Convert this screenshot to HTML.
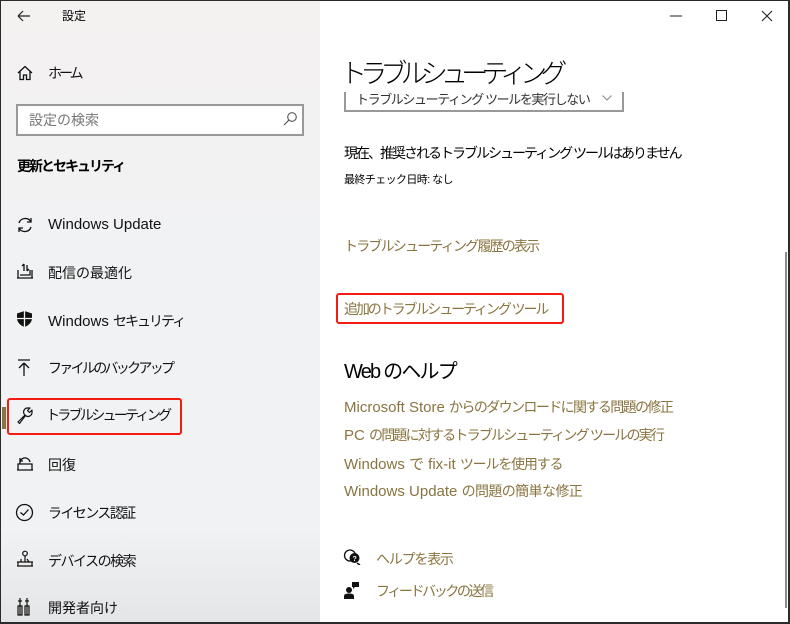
<!DOCTYPE html>
<html><head><meta charset="utf-8">
<style>
*{margin:0;padding:0;box-sizing:border-box}
body{width:790px;height:624px;overflow:hidden;font-family:"Liberation Sans","Noto Sans CJK JP",sans-serif;background:#fff;position:relative;color:#000}
.win{position:absolute;left:0;top:0;width:790px;height:624px;border:1px solid #2b2b2b;border-right:2px solid #2b2b2b;border-bottom:2px solid #2b2b2b}
.left{position:absolute;left:1px;top:1px;width:319px;height:621px;background:linear-gradient(180deg,#f4f1f1 0%,#f1f2f4 40%,#f1f2f4 85%,#e4e5e7 100%)}
.t{position:absolute;white-space:nowrap}
.nav{font-size:14px;color:#111}
.ico{position:absolute}
.link{color:#8a7440;font-size:14px}
.red{position:absolute;border:2.5px solid #f31b12;border-radius:3px}
</style></head><body>
<div class="left"></div>
<div class="win"></div>
<svg class="ico" style="left:17px;top:10px" width="14" height="12"><path d="M1 6H13M1 6L6 1M1 6L6 11" stroke="#222" stroke-width="1.2" fill="none"/></svg>
<div class="t" style="left:62px;top:7px;font-size:12px">設定</div>
<svg class="ico" style="left:670px;top:15px" width="12" height="2"><path d="M0 1H12" stroke="#222"/></svg>
<svg class="ico" style="left:716px;top:10px" width="11" height="11"><rect x="0.5" y="0.5" width="10" height="10" stroke="#222" fill="none"/></svg>
<svg class="ico" style="left:761px;top:10px" width="12" height="12"><path d="M1 1L11 11M11 1L1 11" stroke="#222" stroke-width="1.1"/></svg>
<svg class="ico" style="left:17px;top:65px" width="16" height="16"><path d="M1 8L8 1.5L15 8M3 6.5V14.5H6.5V10H9.5V14.5H13V6.5" stroke="#111" stroke-width="1.3" fill="none"/></svg>
<div class="t nav" style="left:48px;top:63px;letter-spacing:-3px">ホーム</div>
<div style="position:absolute;left:16px;top:104px;width:288px;height:32px;border:2px solid #999;background:#fff"></div>
<div class="t" style="left:29px;top:110px;font-size:14px;color:#777">設定の検索</div>
<svg class="ico" style="left:282px;top:111px" width="16" height="16"><circle cx="10" cy="6" r="4.3" stroke="#555" fill="none" stroke-width="1.1"/><path d="M7 9L2 14" stroke="#555" stroke-width="1.2"/></svg>
<div class="t" style="left:17px;top:156px;font-size:14px;font-weight:bold;letter-spacing:-2px">更新とセキュリティ</div>
<svg class="ico" style="left:16px;top:216px" width="18" height="18"><path d="M3 7A6.5 6.5 0 0 1 15 6M15 11A6.5 6.5 0 0 1 3 12" stroke="#111" stroke-width="1.3" fill="none"/><path d="M15 2V6H11M3 16V12H7" stroke="#111" stroke-width="1.3" fill="none"/></svg>
<div class="t nav" style="left:48px;top:216px;font-size:15px">Windows Update</div>
<svg class="ico" style="left:16px;top:262px" width="18" height="18"><path d="M1 16H17M2 16V8M16 16V8M4 13H14V8M8 2V9M8 2L6 4M11 9V3M11 9L13 7" stroke="#111" stroke-width="1.3" fill="none"/></svg>
<div class="t nav" style="left:48px;top:263px">配信の最適化</div>
<svg class="ico" style="left:16px;top:310px" width="17" height="18"><path d="M8.5 1L16 3.5V8C16 12.5 12.5 15.5 8.5 17C4.5 15.5 1 12.5 1 8V3.5Z" fill="#111"/><path d="M8.5 1V17M1 8.5H16" stroke="#f1f2f4" stroke-width="1.3"/></svg>
<div class="t nav" style="left:48px;top:311px;font-size:15px">Windows <span style="font-size:14px;letter-spacing:-2px">セキュリティ</span></div>
<svg class="ico" style="left:17px;top:359px" width="14" height="18"><path d="M1 1H13M7 4V17M7 4L2 9M7 4L12 9" stroke="#111" stroke-width="1.3" fill="none"/></svg>
<div class="t nav" style="left:48px;top:358px;letter-spacing:-2.7px">ファイルのバックアップ</div>
<div style="position:absolute;left:2px;top:407px;width:4px;height:22px;background:#8a7440"></div>
<div class="red" style="left:7px;top:398px;width:175px;height:37px"></div>
<svg class="ico" style="left:16px;top:406px" width="18" height="18"><path d="M2 16L9 9A4 4 0 0 1 12 2L14 2L11.5 4.5L13.5 6.5L16 4V6A4 4 0 0 1 9.5 9.5L3.5 17.5Z" stroke="#111" stroke-width="1.2" fill="none" stroke-linejoin="round"/></svg>
<div class="t nav" style="left:46px;top:405px;letter-spacing:-2.7px">トラブルシューティング</div>
<svg class="ico" style="left:16px;top:454px" width="18" height="18"><path d="M1 16H17M2 16V10H16V16M4 10A5 5 0 1 1 14 8M4 4V7H7" stroke="#111" stroke-width="1.3" fill="none"/></svg>
<div class="t nav" style="left:48px;top:455px">回復</div>
<svg class="ico" style="left:15px;top:503px" width="19" height="19"><circle cx="9.5" cy="9.5" r="8" stroke="#111" stroke-width="1.3" fill="none"/><path d="M5.5 9.5L8.5 12L13.5 6.5" stroke="#111" stroke-width="1.3" fill="none"/></svg>
<div class="t nav" style="left:48px;top:503px;letter-spacing:-1.6px">ライセンス認証</div>
<svg class="ico" style="left:16px;top:550px" width="18" height="18"><circle cx="9" cy="3.5" r="2.3" stroke="#111" stroke-width="1.2" fill="none"/><path d="M9 6V12M5 9V12M1 12H17M1 16H17M2 12V16M16 12V16M13 12L11 9" stroke="#111" stroke-width="1.2" fill="none"/></svg>
<div class="t nav" style="left:48px;top:551px;letter-spacing:-1.5px">デバイスの検索</div>
<svg class="ico" style="left:17px;top:597px" width="14" height="20"><path d="M3 1V18M10 1V18M1 4H5M8 4H12M1 9H5V18H1ZM8 9H12V18H8Z" stroke="#111" stroke-width="1.2" fill="none"/></svg>
<div class="t nav" style="left:48px;top:598px">開発者向け</div>
<div style="position:absolute;left:344px;top:80px;width:280px;height:32px;overflow:hidden;border:2px solid #999;border-top:none">
<div class="t" style="left:10px;top:9px;font-size:13px;color:#333;letter-spacing:-1.4px">トラブルシューティング ツールを実行しない</div>
<svg class="ico" style="left:256px;top:15px" width="10" height="6"><path d="M0.5 0.5L5 5L9.5 0.5" stroke="#888" fill="none"/></svg>
</div>
<div style="position:absolute;left:330px;top:50px;width:300px;height:42px;background:#fff"></div>
<div class="t" style="left:340px;top:52px;font-size:27px;font-weight:300;letter-spacing:-6.8px">トラブルシューティング</div>
<div class="t" style="left:344px;top:143px;font-size:14px;letter-spacing:-2px">現在、推奨されるトラブルシューティング ツールはありません</div>
<div class="t" style="left:344px;top:171px;font-size:11px;letter-spacing:-0.6px">最終チェック日時: なし</div>
<div class="t link" style="left:344px;top:236px;letter-spacing:-1.8px">トラブルシューティング履歴の表示</div>
<div class="red" style="left:336px;top:293px;width:228px;height:31px"></div>
<div class="t link" style="left:344px;top:299px;letter-spacing:-2.1px">追加のトラブルシューティング ツール</div>
<div class="t" style="left:344px;top:355px;font-size:20px;letter-spacing:-1.8px">Web のヘルプ</div>
<div class="t link" style="left:344px;top:397px;font-size:15px">Microsoft Store <span style="font-size:14px;letter-spacing:-1.6px">からのダウンロードに関する問題の修正</span></div>
<div class="t link" style="left:344px;top:425px;font-size:15px">PC <span style="font-size:14px;letter-spacing:-1.8px">の問題に対するトラブルシューティング ツールの実行</span></div>
<div class="t link" style="left:344px;top:453px;font-size:15px">Windows で fix-it <span style="font-size:14px;letter-spacing:-1.2px">ツールを使用する</span></div>
<div class="t link" style="left:344px;top:481px;font-size:15px">Windows Update <span style="font-size:14px;letter-spacing:-0.6px">の問題の簡単な修正</span></div>
<svg class="ico" style="left:343px;top:549px" width="18" height="16"><circle cx="7" cy="6.5" r="5.5" stroke="#111" stroke-width="1.3" fill="#fff"/><circle cx="11.5" cy="9" r="5" fill="#111"/><path d="M14 14L17 16" stroke="#111" stroke-width="1.5"/><text x="9.5" y="12" font-size="7" fill="#fff" font-family="Liberation Sans" font-weight="bold">?</text></svg>
<div class="t link" style="left:376px;top:549px;letter-spacing:-1.2px">ヘルプを表示</div>
<svg class="ico" style="left:344px;top:581px" width="16" height="18"><circle cx="5" cy="9" r="3" fill="#111"/><path d="M0 18V15Q0 12.5 5 12.5Q10 12.5 10 15V18Z" fill="#111"/><path d="M8 1H15V6H11L9 8V6H8Z" fill="#111"/></svg>
<div class="t link" style="left:376px;top:581px;letter-spacing:-2.4px">フィードバックの送信</div>
<div style="position:absolute;left:785px;top:252px;width:2px;height:356px;background:#8a8a8a"></div>
</body></html>
